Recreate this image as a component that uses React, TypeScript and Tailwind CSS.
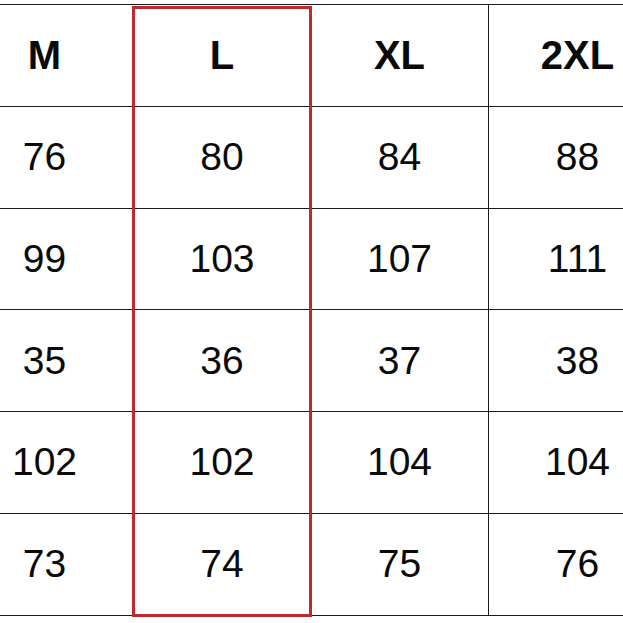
import React from "react";

type Column = {
  label: string;
  values: string[];
  highlight?: boolean;
};

const columns: Column[] = [
  { label: "M", values: ["76", "99", "35", "102", "73"] },
  { label: "L", values: ["80", "103", "36", "102", "74"], highlight: true },
  { label: "XL", values: ["84", "107", "37", "104", "75"] },
  { label: "2XL", values: ["88", "111", "38", "104", "76"] },
];

function SizeColumn({ column }: { column: Column }) {
  return (
    <div
      className={
        column.highlight
          ? "relative flex w-[178px] flex-col"
          : "flex w-[177px] flex-col"
      }
    >
      <div className="flex h-[101.8px] items-center justify-center border-b-[1.5px] border-[#1a1a1a] text-[40px] font-bold">
        {column.label}
      </div>
      {column.values.map((v, i) => (
        <div
          key={i}
          className="flex h-[101.8px] items-center justify-center border-b-[1.5px] border-[#1a1a1a] text-[39px]"
        >
          {v}
        </div>
      ))}
      {column.highlight && (
        <div className="pointer-events-none absolute inset-x-[-1px] top-[1px] bottom-[-1px] border-[3px] border-[#c1272d]" />
      )}
    </div>
  );
}

export default function App() {
  return (
    <div
      className="h-[623px] w-[623px] overflow-hidden bg-white pt-[4px] text-[#0a0a0a]"
      style={{ fontFamily: '"Liberation Sans", Arial, sans-serif' }}
    >
      <div className="ml-[-44px] flex w-[720px] border-t-[1.5px] border-[#1a1a1a]">
        {columns.map((c, i) => (
          <div key={c.label} className={i === 2 ? "border-r-[1.5px] border-[#1a1a1a]" : ""}>
            <SizeColumn column={c} />
          </div>
        ))}
      </div>
    </div>
  );
}
